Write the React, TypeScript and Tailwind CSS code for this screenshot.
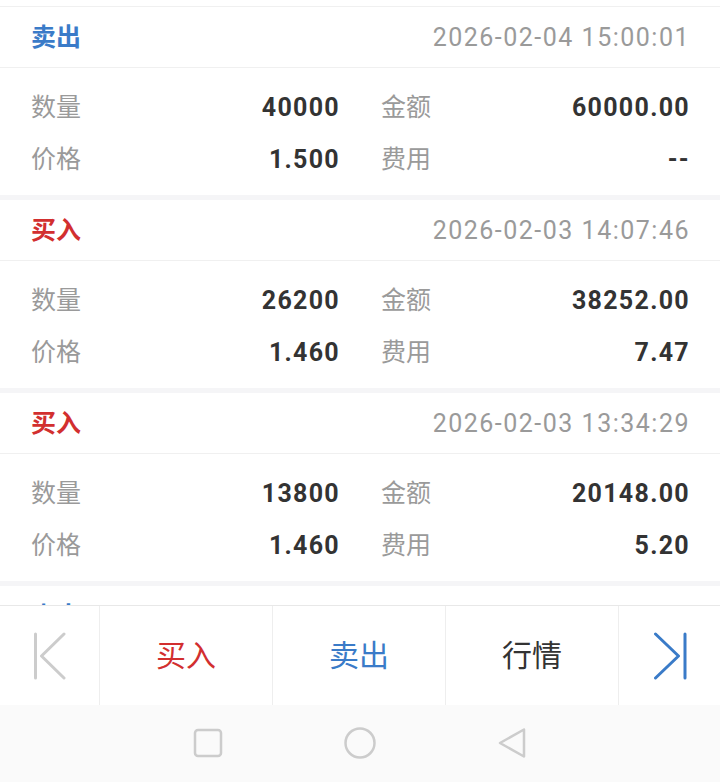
import React from "react";

type Trade = {
  side: "买入" | "卖出";
  time: string;
  qty: string;
  amount: string;
  price: string;
  fee: string;
};

const trades: Trade[] = [
  { side: "卖出", time: "2026-02-04 15:00:01", qty: "40000", amount: "60000.00", price: "1.500", fee: "--" },
  { side: "买入", time: "2026-02-03 14:07:46", qty: "26200", amount: "38252.00", price: "1.460", fee: "7.47" },
  { side: "买入", time: "2026-02-03 13:34:29", qty: "13800", amount: "20148.00", price: "1.460", fee: "5.20" },
  { side: "卖出", time: "2026-02-02 14:55:12", qty: "20000", amount: "29400.00", price: "1.470", fee: "--" },
];

const font = { fontFamily: 'Roboto, "Noto Sans CJK SC", sans-serif' };

function Cell({ label, value }: { label: string; value: string }) {
  return (
    <div className="flex items-center justify-between h-[52px]">
      <span className="text-[25px] text-[#9a9a9a]">{label}</span>
      <span className="text-[25px] font-bold text-[#333333] tracking-[1.3px] -mr-[1px]">{value}</span>
    </div>
  );
}

function Card({ t }: { t: Trade }) {
  const isSell = t.side === "卖出";
  return (
    <div className="bg-white shrink-0">
      <div className="h-[61px] pt-[2px] flex items-center justify-between px-[31px] border-b border-[#f0f0f0]">
        <span className={`text-[25px] font-bold ${isSell ? "text-[#3a7bc8]" : "text-[#d22f2f]"}`}>{t.side}</span>
        <span className="text-[25px] text-[#9a9a9a] tracking-[1.5px] -mr-[1px]">{t.time}</span>
      </div>
      <div className="h-[127px] pt-[14px] px-[31px] grid grid-cols-2 gap-x-[42px] content-start">
        <Cell label="数量" value={t.qty} />
        <Cell label="金额" value={t.amount} />
        <Cell label="价格" value={t.price} />
        <Cell label="费用" value={t.fee} />
      </div>
    </div>
  );
}

export default function App() {
  return (
    <div className="w-[720px] h-[782px] flex flex-col bg-white overflow-hidden" style={font}>
      <div className="flex-1 overflow-hidden bg-[#f5f5f7] flex flex-col gap-[5px]">
        <div className="shrink-0 h-[7px] bg-white border-b border-[#f0f0f0] -mb-[5px]" />
        {trades.map((t, i) => (
          <Card key={i} t={t} />
        ))}
      </div>
      <div className="h-[100px] shrink-0 border-t border-[#e8e8e8] bg-white flex">
        <div className="w-[100px] border-r border-[#eeeeee] flex items-center justify-center">
          <svg width="36" height="48" viewBox="0 0 36 48" fill="none" stroke="#cccccc" strokeWidth="3" strokeLinecap="round" strokeLinejoin="round">
            <line x1="3.5" y1="2" x2="3.5" y2="46" />
            <polyline points="32,2 9.5,24 32,46" />
          </svg>
        </div>
        <div className="flex-1 border-r border-[#eeeeee] flex items-center justify-center text-[30px] text-[#d22f2f]">买入</div>
        <div className="flex-1 border-r border-[#eeeeee] flex items-center justify-center text-[30px] text-[#3a7bc8]">卖出</div>
        <div className="flex-1 border-r border-[#eeeeee] flex items-center justify-center text-[30px] text-[#333333]">行情</div>
        <div className="w-[101px] flex items-center justify-center">
          <svg width="36" height="48" viewBox="0 0 36 48" fill="none" stroke="#3a7bc8" strokeWidth="3" strokeLinecap="round" strokeLinejoin="round">
            <polyline points="3.5,2 26.5,24 3.5,46" />
            <line x1="33" y1="2" x2="33" y2="46" />
          </svg>
        </div>
      </div>
      <div className="h-[77px] shrink-0 bg-[#fafafa] flex items-center justify-center gap-[121px] pb-[1px]">
        <svg width="30" height="30" viewBox="0 0 30 30" fill="none" stroke="#cccccc" strokeWidth="2.5">
          <rect x="2" y="2" width="26" height="26" rx="3" />
        </svg>
        <svg width="32" height="32" viewBox="0 0 32 32" fill="none" stroke="#cccccc" strokeWidth="2.5">
          <circle cx="16" cy="16" r="14.5" />
        </svg>
        <svg width="30" height="32" viewBox="0 0 30 32" fill="none" stroke="#cccccc" strokeWidth="2.5" strokeLinejoin="round">
          <path d="M27 2.5 L3 16 L27 29.5 Z" />
        </svg>
      </div>
    </div>
  );
}
